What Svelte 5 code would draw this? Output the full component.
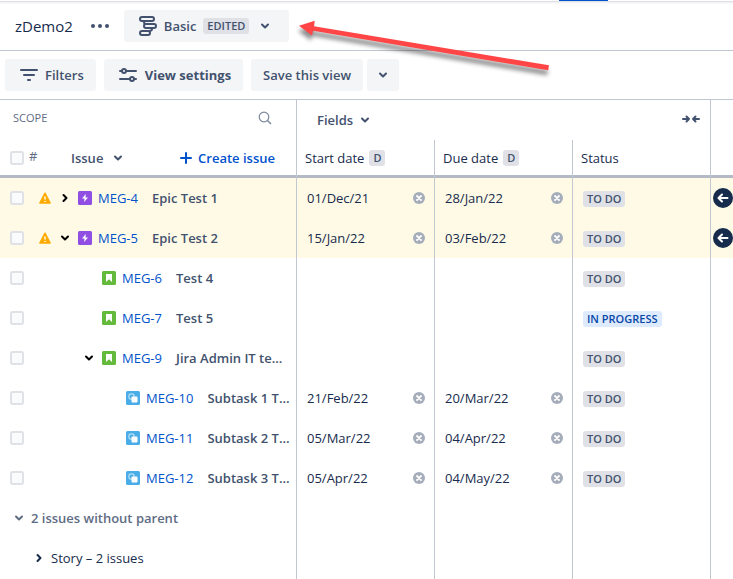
<script>
  const issues = [
    { key: "MEG-4", type: "epic", title: "Epic Test 1", level: 0, toggle: "right", start: "01/Dec/21", due: "28/Jan/22", status: "TO DO", warning: true },
    { key: "MEG-5", type: "epic", title: "Epic Test 2", level: 0, toggle: "down", start: "15/Jan/22", due: "03/Feb/22", status: "TO DO", warning: true },
    { key: "MEG-6", type: "story", title: "Test 4", level: 1, status: "TO DO" },
    { key: "MEG-7", type: "story", title: "Test 5", level: 1, status: "IN PROGRESS" },
    { key: "MEG-9", type: "story", title: "Jira Admin IT te...", level: 1, toggle: "down", status: "TO DO" },
    { key: "MEG-10", type: "subtask", title: "Subtask 1 T...", level: 2, start: "21/Feb/22", due: "20/Mar/22", status: "TO DO" },
    { key: "MEG-11", type: "subtask", title: "Subtask 2 T...", level: 2, start: "05/Mar/22", due: "04/Apr/22", status: "TO DO" },
    { key: "MEG-12", type: "subtask", title: "Subtask 3 T...", level: 2, start: "05/Apr/22", due: "04/May/22", status: "TO DO" }
  ];
</script>

{#snippet chevron(dir)}
  <svg class="chevron" class:right={dir === "right"} width="10" height="10" viewBox="0 0 10 10" aria-hidden="true">
    <path d="M2 3.5 5 6.5 8 3.5" fill="none" stroke="currentColor" stroke-width="2" stroke-linecap="round" stroke-linejoin="round" />
  </svg>
{/snippet}

{#snippet dateCell(value, label)}
  <td>
    {#if value}
      <div class="date">
        <span>{value}</span>
        <button class="plain clear" aria-label="Clear {label}">
          <svg width="12" height="12" viewBox="0 0 12 12">
            <circle cx="6" cy="6" r="6" fill="#a5adba" />
            <path d="M4 4l4 4M8 4l-4 4" stroke="#fff" stroke-width="1.8" stroke-linecap="round" />
          </svg>
        </button>
      </div>
    {/if}
  </td>
{/snippet}

<div class="page">
  <div class="nav-edge"><span class="nav-active"></span></div>

  <header class="titlebar">
    <h1>zDemo2</h1>
    <button class="plain more" aria-label="More actions">
      <svg width="18" height="4" viewBox="0 0 18 4">
        <circle cx="2" cy="2" r="2" /><circle cx="9" cy="2" r="2" /><circle cx="16" cy="2" r="2" />
      </svg>
    </button>
    <button class="btn view">
      <svg width="18" height="20" viewBox="0 0 18 20" fill="none" stroke="currentColor" stroke-width="2">
        <rect x="1" y="1" width="14" height="4" rx="2" />
        <rect x="5" y="8" width="12" height="4" rx="2" />
        <rect x="1" y="15" width="10" height="4" rx="2" />
        <path d="M5 5v1c0 2 1 2 2 2M13 12v1c0 2-2 2-3 2" />
      </svg>
      <span>Basic</span>
      <span class="lozenge edited">EDITED</span>
      {@render chevron("down")}
    </button>
  </header>

  <div class="toolbar">
    <button class="btn">
      <svg width="18" height="12" viewBox="0 0 18 12" stroke="currentColor" stroke-width="2" stroke-linecap="round">
        <path d="M1 1h16M4 6h10M8 11h2" />
      </svg>
      Filters
    </button>
    <button class="btn settings">
      <svg width="18" height="14" viewBox="0 0 18 14" fill="none" stroke="currentColor" stroke-width="2" stroke-linecap="round">
        <path d="M1 3h2M8 3h9M1 11h9M16 11h1" />
        <circle cx="5" cy="3" r="2" /><circle cx="13" cy="11" r="2" />
      </svg>
      View settings
    </button>
    <div class="split">
      <button class="btn save">Save this view</button>
      <button class="btn drop" aria-label="More save options">{@render chevron("down")}</button>
    </div>
  </div>

  <table>
    <colgroup>
      <col class="scope-col" />
      <col class="field-col" />
      <col class="field-col" />
      <col class="field-col" />
      <col />
    </colgroup>
    <thead>
      <tr>
        <th>
          <div class="scope-head">
            SCOPE
            <button class="plain" aria-label="Search">
              <svg width="14" height="14" viewBox="0 0 14 14" fill="none" stroke="#7a869a">
                <circle cx="6" cy="6" r="4.8" stroke-width="1.2" /><path d="M9.5 9.5 13 13" stroke-width="1.4" />
              </svg>
            </button>
          </div>
        </th>
        <th colspan="3">
          <div class="fields-head">
            <button class="plain">Fields {@render chevron("down")}</button>
            <button class="plain" aria-label="Collapse fields">
              <svg width="18" height="10" viewBox="0 0 18 10" fill="none" stroke="currentColor" stroke-width="2" stroke-linecap="round" stroke-linejoin="round">
                <path d="M1 4h6M4.5 1.5 7 4 4.5 6.5M17 4h-6M13.5 1.5 11 4l2.5 2.5" />
              </svg>
            </button>
          </div>
        </th>
        <th></th>
      </tr>
      <tr class="column-row">
        <th>
          <div class="issue-head">
            <input type="checkbox" aria-label="Select all issues" />
            <span class="hash">#</span>
            <button class="plain issue-sort">Issue {@render chevron("down")}</button>
            <button class="plain create">
              <svg width="12" height="12" viewBox="0 0 12 12" stroke="currentColor" stroke-width="2" stroke-linecap="round">
                <path d="M6 1v10M1 6h10" />
              </svg>
              Create issue
            </button>
          </div>
        </th>
        <th><div class="label">Start date <span class="lozenge">D</span></div></th>
        <th><div class="label">Due date <span class="lozenge">D</span></div></th>
        <th><div class="label">Status</div></th>
        <th></th>
      </tr>
    </thead>
    <tbody>
      {#each issues as issue (issue.key)}
        <tr class:warn={issue.warning}>
          <td>
            <div class="issue">
              <input type="checkbox" aria-label="Select {issue.key}" />
              <span class="warning">
                {#if issue.warning}
                  <svg width="12" height="12" viewBox="0 0 12 12">
                    <path d="M6 1.2 11.2 11H.8z" fill="#ffab00" stroke="#ffab00" stroke-width="1.4" stroke-linejoin="round" />
                    <path d="M6 4.5v3M6 9v1" stroke="#fff" stroke-width="1.4" />
                  </svg>
                {/if}
              </span>
              <span class="indent" style="width: {issue.level * 24}px"></span>
              <span class="toggle">
                {#if issue.toggle}
                  <button class="plain" aria-label="Toggle {issue.key}">{@render chevron(issue.toggle)}</button>
                {/if}
              </span>
              <svg class="type {issue.type}" width="14" height="14" viewBox="0 0 14 14">
                <rect width="14" height="14" rx="1.5" fill="currentColor" />
                {#if issue.type === "epic"}
                  <path d="M7.8 3 4 7.6h2.5L6.2 11 10 6.4H7.5z" fill="#fff" />
                {:else if issue.type === "story"}
                  <path d="M4 3h6v8L7 8.3 4 11z" fill="#fff" />
                {:else}
                  <rect x="3" y="3" width="5" height="5" rx="1" fill="none" stroke="#fff" stroke-opacity=".75" />
                  <rect x="5.5" y="5.5" width="6" height="6" rx="1" fill="#fff" />
                {/if}
              </svg>
              <a href="#{issue.key}">{issue.key}</a>
              <span class="summary">{issue.title}</span>
            </div>
          </td>
          {@render dateCell(issue.start, "start date")}
          {@render dateCell(issue.due, "due date")}
          <td>
            <div class="status">
              <span class="lozenge" class:progress={issue.status === "IN PROGRESS"}>{issue.status}</span>
            </div>
          </td>
          <td>
            {#if issue.warning}
              <button class="jump" aria-label="Scroll to {issue.key}">
                <svg width="12" height="12" viewBox="0 0 12 12" fill="none" stroke="#fff" stroke-width="2" stroke-linecap="round" stroke-linejoin="round">
                  <path d="M10.5 6H2M5 2.5 1.5 6 5 9.5" />
                </svg>
              </button>
            {/if}
          </td>
        </tr>
      {/each}
      <tr>
        <td><button class="plain group">{@render chevron("down")} 2 issues without parent</button></td>
        <td></td><td></td><td></td><td></td>
      </tr>
      <tr>
        <td><button class="plain group nested">{@render chevron("right")} Story – 2 issues</button></td>
        <td></td><td></td><td></td><td></td>
      </tr>
      <tr class="filler"><td></td><td></td><td></td><td></td><td></td></tr>
    </tbody>
  </table>

  <!-- callout pointing at the view selector -->
  <svg class="callout" width="270" height="70" viewBox="290 15 270 70" aria-hidden="true">
    <path d="M299 25.7 314.7 20.7 314 26.3 549 65.3 548.2 70.2 313.1 30.8 312 35.5z" fill="#ff4545" />
  </svg>
</div>

<style>
  :global(body) {
    background: #fff;
  }

  .page {
    position: relative;
    font-family: "Open Sans", "Noto Sans", sans-serif;
    font-size: 13px;
    line-height: 20px;
    color: #172b4d;
  }

  button {
    font: inherit;
    color: #42526e;
    border: 0;
    cursor: pointer;
  }

  .plain {
    display: flex;
    align-items: center;
    padding: 0;
    background: none;
  }

  svg {
    display: block;
    flex: none;
  }

  .chevron.right {
    transform: rotate(-90deg);
  }

  .nav-edge {
    display: flex;
    justify-content: flex-end;
    height: 2px;
    background: linear-gradient(#fff 50%, #dfe1e6 50%);
    box-shadow: 0 1px 2px #ebecf0;
  }

  .nav-active {
    width: 49px;
    height: 1px;
    margin-right: 125px;
    background: #0052cc;
  }

  .titlebar {
    display: flex;
    align-items: center;
    height: 48px;
    padding: 0 15px;
    border-bottom: 1px solid #c1c7d0;
  }

  h1 {
    margin: 0;
    font-size: 15px;
    font-weight: 400;
  }

  .more {
    margin: 0 15px 0 18px;
  }

  .more svg {
    fill: #42526e;
  }

  .btn {
    display: flex;
    align-items: center;
    gap: 7px;
    height: 32px;
    padding: 0 12px 0 15px;
    border-radius: 3px;
    background: #f4f5f7;
    font-weight: 600;
    white-space: nowrap;
  }

  .view {
    padding: 0 19px 0 15px;
  }

  .view > .chevron {
    margin-left: 4px;
  }

  .lozenge {
    padding: 0 4px;
    border-radius: 3px;
    background: #dfe1e6;
    color: #42526e;
    font-size: 11px;
    font-weight: 600;
    line-height: 16px;
  }

  .toolbar {
    display: flex;
    align-items: center;
    gap: 8px;
    height: 48px;
    padding: 0 5px;
    border-bottom: 1px solid #c1c7d0;
  }

  .settings {
    gap: 8px;
    font-weight: 700;
  }

  .split {
    display: flex;
    gap: 4px;
  }

  .save {
    padding: 0 12px;
  }

  .drop {
    padding: 0 11px;
  }

  table {
    width: 100%;
    table-layout: fixed;
    border-collapse: separate;
    border-spacing: 0;
  }

  .scope-col {
    width: 297px;
  }

  .field-col {
    width: 138px;
  }

  th,
  td {
    height: 40px;
    padding: 0;
    border-right: 1px solid #c1c7d0;
    font-weight: 400;
    text-align: left;
  }

  th:last-child,
  td:last-child {
    border-right: 0;
  }

  .column-row th {
    height: 35px;
    box-shadow: inset 0 -3px #b3bac5;
    padding-bottom: 3px;
  }

  .scope-head {
    display: flex;
    align-items: center;
    justify-content: space-between;
    padding: 0 24px 4px 13px;
    color: #5e6c84;
    font-size: 11px;
  }

  .fields-head {
    display: flex;
    align-items: center;
    justify-content: space-between;
    padding: 0 10px 0 20px;
  }

  .fields-head .plain {
    gap: 7px;
    font-weight: 600;
  }

  .issue-head {
    display: flex;
    align-items: center;
    padding: 0 21px 0 10px;
  }

  .hash {
    width: 42px;
    padding: 0 0 4px 5px;
    box-sizing: border-box;
    color: #5e6c84;
  }

  .issue-sort {
    gap: 10px;
    margin-left: 5px;
    font-weight: 600;
  }

  .create {
    gap: 6px;
    margin-left: auto;
    color: #0052cc;
    font-weight: 600;
  }

  .label {
    display: flex;
    align-items: center;
    gap: 5px;
    padding-left: 8px;
  }

  input {
    appearance: none;
    flex: none;
    box-sizing: border-box;
    width: 14px;
    height: 14px;
    margin: 0;
    border: 2px solid #dfe1e6;
    border-radius: 3px;
    background: #fafbfc;
  }

  .issue {
    display: flex;
    align-items: center;
    padding-left: 10px;
    white-space: nowrap;
  }

  .warn td {
    background: #fffae6;
  }

  .warning {
    flex: none;
    width: 14px;
    margin-left: 15px;
  }

  .indent {
    flex: none;
  }

  .toggle {
    display: flex;
    flex: none;
    justify-content: center;
    width: 24px;
  }

  .toggle .plain {
    color: #000;
  }

  .type {
    margin: 0 6px 0 1px;
  }

  .epic {
    color: #904ee2;
  }

  .story {
    color: #63ba3c;
  }

  .subtask {
    color: #4bade8;
  }

  a {
    color: #0052cc;
    text-decoration: none;
  }

  .summary {
    margin-left: 14px;
    color: #42526e;
    font-weight: 600;
  }

  .date {
    display: flex;
    align-items: center;
    justify-content: space-between;
    padding: 0 9px 0 10px;
  }

  .status {
    display: flex;
    padding: 1px 0 0 10px;
  }

  .progress {
    background: #deebff;
    color: #0747a6;
  }

  .jump {
    display: flex;
    align-items: center;
    justify-content: center;
    width: 20px;
    height: 20px;
    margin-left: 2px;
    padding: 0;
    border-radius: 50%;
    background: #172b4d;
  }

  .group {
    gap: 7px;
    margin-left: 14px;
    color: #5e6c84;
    font-weight: 600;
  }

  .nested {
    margin-left: 34px;
    color: #172b4d;
    font-weight: 400;
  }

  .filler td {
    height: 1px;
  }

  .callout {
    position: absolute;
    top: 15px;
    left: 290px;
    filter: drop-shadow(-1px 5px 2px rgba(0, 0, 0, 0.45));
    pointer-events: none;
  }
</style>
